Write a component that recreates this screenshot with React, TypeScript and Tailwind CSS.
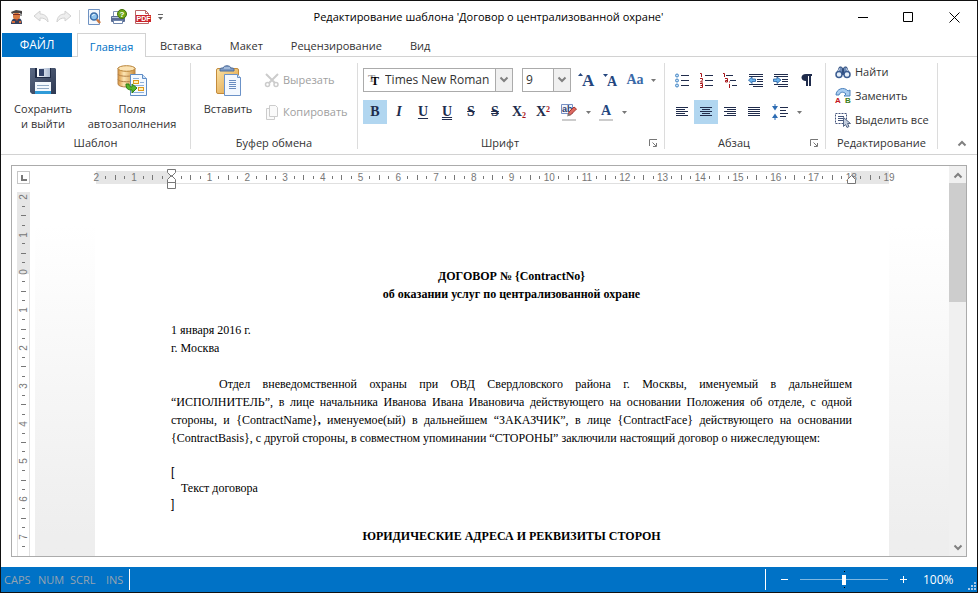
import type { ReactNode } from 'react';
import { clsx } from 'clsx';

const tabs = ['Вставка', 'Макет', 'Рецензирование', 'Вид'];

const horizontalMarks = Array.from({ length: 85 }, (_, i) => i);
const verticalMarks = Array.from({ length: 38 }, (_, i) => i);

const partiesText =
  'Отдел вневедомственной охраны при ОВД Свердловского района г. Москвы, именуемый в дальнейшем ' +
  '“ИСПОЛНИТЕЛЬ”, в лице начальника Иванова Ивана Ивановича действующего на основании Положения об ' +
  'отделе, с одной стороны, и {ContractName}';

const partiesTextEnd =
  ' именуемое(ый) в дальнейшем “ЗАКАЗЧИК”, в лице {ContractFace} действующего на основании ' +
  '{ContractBasis}, с другой стороны, в совместном упоминании “СТОРОНЫ” заключили настоящий договор ' +
  'о нижеследующем:';

/* ---------- icons ---------- */

function OfficerIcon() {
  return (
    <svg width="16" height="16" viewBox="0 0 16 16">
      <path d="M2 15c0-4 2-6 6-6s5 2 5 6z" fill="#34405c" />
      <path d="M5 9l3 3 2-3z" fill="#b8452a" />
      <rect x="4" y="4" width="7" height="6" rx="2" fill="#d9793f" />
      <path d="M2 3l5-2 6 1v3l-2-1H5L3 5z" fill="#4b4747" />
      <path d="M4 5h7v1H4z" fill="#7e2c25" />
      <path d="M12 3v4" stroke="#333" />
      <path d="M3 13h3M10 13h2" stroke="#d46a3a" strokeWidth="2" />
    </svg>
  );
}

function UndoIcon({ flip = false }: { flip?: boolean }) {
  return (
    <svg width="16" height="16" viewBox="0 0 16 16" className={clsx(flip && '-scale-x-100')}>
      <path d="M1 7l6-5v3c5 0 8 3 8 8-2-3-4-4-8-4v3z" fill="#eee" stroke="#d2d2d2" />
    </svg>
  );
}

function PreviewIcon() {
  return (
    <svg width="16" height="16" viewBox="0 0 16 16">
      <path d="M1.500.5h11v15h-11z" fill="#f4f8fd" stroke="#6f92c2" />
      <circle cx="7" cy="7.500" r="3.500" fill="#8fc4ee" stroke="#3d6ea9" strokeWidth="1.500" />
      <path d="M5.500 7c0-1 1-1.500 2-1.500" stroke="#fff" fill="none" />
      <path d="M10 10.500l3 3.500" stroke="#c9773f" strokeWidth="2.500" />
    </svg>
  );
}

function PrinterIcon() {
  return (
    <svg width="17" height="16" viewBox="0 0 17 16">
      <path d="M3.500 2.500h8v5h-8z" fill="#fff" stroke="#7f93b3" />
      <rect x="1" y="7" width="14" height="6" rx="1" fill="#5a6c94" />
      <path d="M2 8.500h12" stroke="#b6c4da" />
      <path d="M3.500 11.500h9v3h-9z" fill="#fff" stroke="#6f86ac" />
      <circle cx="12" cy="5" r="4.500" fill="#6fa818" stroke="#447109" />
      <text x="12" y="8" textAnchor="middle" fontSize="8" fontWeight="bold" fill="#fff" fontFamily="Liberation Sans, sans-serif">?</text>
    </svg>
  );
}

function PdfIcon() {
  return (
    <svg width="17" height="16" viewBox="0 0 17 16">
      <path d="M1.500 1.500h10l3 3v10h-13z" fill="#fff" stroke="#b66" />
      <path d="M11.500 1.500v3h3" fill="none" stroke="#b66" />
      <rect x="2" y="6" width="15" height="7" fill="#cc2228" />
      <text x="9.500" y="12" textAnchor="middle" fontSize="7" fontWeight="bold" fill="#fff" fontFamily="Liberation Sans, sans-serif">PDF</text>
    </svg>
  );
}

function SaveIcon() {
  return (
    <svg width="32" height="32" viewBox="0 0 32 32">
      <defs>
        <linearGradient id="disk" x1="0" y1="0" x2="1" y2="1">
          <stop offset="0" stopColor="#5b6983" />
          <stop offset="1" stopColor="#2d3852" />
        </linearGradient>
        <linearGradient id="shutter" x1="0" y1="0" x2="1" y2="0">
          <stop offset="0" stopColor="#fff" />
          <stop offset="1" stopColor="#a9b8d0" />
        </linearGradient>
      </defs>
      <path d="M3 3h25l1 1v25H5l-2-2z" fill="url(#disk)" />
      <path d="M8 3h16v10H8z" fill="#1f2a44" />
      <path d="M10 3h13v9H10z" fill="url(#shutter)" />
      <path d="M12 4h5v7h-5z" fill="#34446a" />
      <path d="M8 17h16v12H8z" fill="#f3f8fd" />
      <path d="M10 20.500h12M10 23.500h12" stroke="#8ea8c4" />
      <path d="M8 26h16v3H8z" fill="#2f9bd8" />
    </svg>
  );
}

function FieldsIcon() {
  return (
    <svg width="32" height="32" viewBox="0 0 32 32">
      <defs>
        <linearGradient id="barrel" x1="0" y1="0" x2="1" y2="0">
          <stop offset="0" stopColor="#d9953f" />
          <stop offset=".35" stopColor="#fde6b4" />
          <stop offset="1" stopColor="#c98a38" />
        </linearGradient>
      </defs>
      <path d="M2 3v16c0 4 17 4 17 0V3z" fill="url(#barrel)" stroke="#b5834a" />
      <path d="M2 9c0 3 17 3 17 0M2 14.500c0 3 17 3 17 0" fill="none" stroke="#b5834a" />
      <ellipse cx="10.500" cy="3.500" rx="8.500" ry="2.800" fill="#fbe3b4" stroke="#b98337" />
      <path d="M14.500 9.500h12l4 4v17h-16z" fill="#f4f9ff" stroke="#5f8dc6" />
      <path d="M26.500 9.500v4h4" fill="#cfe2f7" stroke="#5f8dc6" />
      <path d="M17 13.500h6M24 17.500h4M17 20.500h11M17 27.500h11" stroke="#8db0da" />
      <rect x="17.500" y="15.500" width="5" height="3" fill="#fff0b8" stroke="#df9a1d" />
      <rect x="22.500" y="22.500" width="5" height="3" fill="#fff0b8" stroke="#df9a1d" />
      <path d="M10 19c0 5 2 6 6 6v3l5-5-5-4v3c-2 0-3-1-3-3z" fill="#55b52c" stroke="#2c7d15" />
    </svg>
  );
}

function PasteIcon() {
  return (
    <svg width="32" height="32" viewBox="0 0 32 32">
      <defs>
        <linearGradient id="board" x1="0" y1="0" x2="1" y2="1">
          <stop offset="0" stopColor="#fbe3a6" />
          <stop offset="1" stopColor="#dc9a3c" />
        </linearGradient>
      </defs>
      <rect x="4.500" y="3.500" width="22" height="25" rx="1.500" fill="url(#board)" stroke="#c48b3b" />
      <path d="M8 6V4c0-1 2-1 3-1 1-3 7-3 8 0 1 0 3 0 3 1v2z" fill="#7b98c2" stroke="#4c6c9c" />
      <path d="M12 3h6" stroke="#c9dbf2" />
      <path d="M12.500 9.500h13l3 3v18h-16z" fill="#f3f8ff" stroke="#6b92c8" />
      <path d="M25.500 9.500v3h3" fill="#d5e5f7" stroke="#6b92c8" />
      <path d="M17 15.500h7M17 17.500h7M17 19.500h7M17 21.500h7M17 23.500h7" stroke="#6a8cc0" />
    </svg>
  );
}

function CutIcon() {
  return (
    <svg width="16" height="16" viewBox="0 0 16 16" fill="none" stroke="#ccc">
      <path d="M2 2l9 9M14 2L5 11" strokeWidth="2" />
      <circle cx="3.500" cy="12.500" r="2" strokeWidth="1.500" />
      <circle cx="12" cy="12.500" r="2" strokeWidth="1.500" />
    </svg>
  );
}

function CopyIcon() {
  return (
    <svg width="16" height="16" viewBox="0 0 16 16" fill="#fafafa" stroke="#ccc">
      <path d="M2.500 4.500h8v11h-8z" />
      <path d="M5.500 1.500h6l2 2v9h-8z" />
    </svg>
  );
}

function FindIcon() {
  return (
    <svg width="16" height="16" viewBox="0 0 16 16">
      <path d="M4.500 3h2L8 5l1.500-2h2L14 9H2z" fill="#6f8cb8" stroke="#2f4d7d" />
      <path d="M4.500 4.500L3 8M11.500 4.500L13 8" stroke="#dbe7f6" />
      <path d="M8 5v6" stroke="#2f4d7d" strokeWidth="2" />
      <circle cx="4" cy="10.500" r="3" fill="#e6f0fb" stroke="#3b5c91" strokeWidth="1.500" />
      <circle cx="12" cy="10.500" r="3" fill="#e6f0fb" stroke="#3b5c91" strokeWidth="1.500" />
    </svg>
  );
}

function ReplaceIcon() {
  return (
    <svg width="16" height="18" viewBox="0 0 16 18">
      <path d="M1 8c0-6 8-9 12-4l2-1v6H9l2-2C8 4 5 5 4 8z" fill="#a9cdf0" stroke="#4d82bd" />
      <g fontSize="8" fontWeight="bold" fontFamily="Liberation Sans, sans-serif">
        <text x="0" y="16" fill="#c3161c">A</text>
        <text x="10" y="16" fill="#3c7d1a">B</text>
      </g>
    </svg>
  );
}

function SelectAllIcon() {
  return (
    <svg width="16" height="16" viewBox="0 0 16 16">
      <path d="M.5 1.500h11v10H.5z" fill="none" stroke="#45557c" strokeDasharray="2 1" />
      <path d="M3 4.500h6M3 6.500h6M3 8.500h5" stroke="#45557c" />
      <path d="M8.500 5.500v9l2-2 1.500 3 2-1-1.500-3h3z" fill="#c3cddd" stroke="#556786" />
    </svg>
  );
}

type Line = [number, number, number];

function Lines({ lines, children }: { lines: Line[]; children?: ReactNode }) {
  return (
    <svg width="16" height="16" viewBox="0 0 16 16">
      {lines.map(([x, y, w]) => (
        <rect key={`${x}-${y}`} x={x} y={y} width={w} height="1" fill="#202c4c" />
      ))}
      {children}
    </svg>
  );
}

function BulletsIcon() {
  return (
    <Lines lines={[[7, 3, 8], [7, 8, 8], [7, 13, 8]]}>
      {[3.5, 8.5, 13.5].map((y) => (
        <circle key={y} cx="3" cy={y} r="1.500" fill="#c5e1f7" stroke="#4384c4" />
      ))}
    </Lines>
  );
}

function NumberingIcon() {
  return (
    <Lines lines={[[7, 3, 8], [7, 8, 8], [7, 13, 8]]}>
      <g fill="none" stroke="#a8161b">
        <path d="M2 1.500h1.500V5" />
        <path d="M2 6.500h2.500v1.500l-2 2h2.500" />
        <path d="M2 11.500h2.500v4H2M2.500 13.500h2" />
      </g>
    </Lines>
  );
}

function MultilevelIcon() {
  return (
    <Lines lines={[[4, 3, 7], [8, 8, 6], [10, 13, 5]]}>
      <g fill="none" stroke="#a8161b">
        <path d="M1 1.500h1.500V5" />
        <path d="M3 6.500h2.500V10M5.500 8.500h-2V10h2" />
        <path d="M7.500 9.500v1M7.500 12v4" />
      </g>
    </Lines>
  );
}

function IndentIcon({ increase = false }: { increase?: boolean }) {
  return (
    <Lines lines={[[1, 2, 14], [1, 4, 14], [9, 7, 6], [9, 9, 6], [1, 12, 14], [5, 14, 10]]}>
      <path
        d={increase ? 'M.5 7v2.500H4v2L8 8 4 5v2z' : 'M7.500 7v2.500H4v2L.5 8 4 5v2z'}
        fill="#6db4ee"
        stroke="#235e9f"
        strokeWidth=".8"
      />
    </Lines>
  );
}

const leftLines: Line[] = [[2, 3, 12], [2, 5, 9], [2, 7, 12], [2, 9, 9], [2, 11, 12]];
const centerLines: Line[] = [[2, 3, 12], [4, 5, 8], [2, 7, 12], [4, 9, 8], [2, 11, 12]];
const rightLines: Line[] = [[2, 3, 12], [5, 5, 9], [2, 7, 12], [5, 9, 9], [2, 11, 12]];
const justifyLines: Line[] = [[2, 3, 12], [2, 5, 12], [2, 7, 12], [2, 9, 12], [2, 11, 12]];

function SpacingIcon() {
  return (
    <Lines lines={[[8, 3, 8], [8, 6, 6], [8, 9, 8], [8, 12, 6]]}>
      <path d="M3 0v3M3 16v-3" stroke="#2d6cb3" />
      <path d="M0 5h6L3 1zM0 11h6l-3 4z" fill="#2d6cb3" className="hidden" />
      <path d="M0 2h6L3 6.500zM0 14h6L3 9.500z" fill="#2d6cb3" />
    </Lines>
  );
}

function HighlightIcon() {
  return (
    <svg width="18" height="18" viewBox="0 0 18 18">
      <path d="M1.500 1.500h11v9h-11z" fill="#f2f6fd" stroke="#7790c4" />
      <text x="2" y="9" fontSize="9" fontWeight="bold" fill="#2c3f70" fontFamily="Liberation Sans, sans-serif">ab</text>
      <path d="M8 12l1-3 5-5 2.500 2-6 6z" fill="#dd6a62" stroke="#a8352d" />
      <path d="M7 13.500L8.500 10l2.500 2z" fill="#777" />
      <path d="M2 16h14v2H2z" fill="#ccc" />
    </svg>
  );
}

function Arrow() {
  return (
    <svg width="5" height="3" viewBox="0 0 5 3">
      <path d="M0 0h5L2.500 3z" fill="#777" />
    </svg>
  );
}

function Chevron({ up = false }: { up?: boolean }) {
  return (
    <svg width="10" height="8" viewBox="0 0 10 8" className={clsx(up && 'rotate-180')}>
      <path d="M1.500 1.500L5 5l3.500-3.500" fill="none" stroke="#808080" strokeWidth="2" />
    </svg>
  );
}

/* ---------- ribbon parts ---------- */

function Group({ title, launcher, className, children }: { title: string; launcher?: boolean; className: string; children: ReactNode }) {
  return (
    <section className={clsx('flex shrink-0 flex-col border-r border-[#dcdcdc]', className)}>
      <div className="flex-1">{children}</div>
      <div className="flex h-3 items-center">
        <h2 className="flex-1 text-center leading-3">{title}</h2>
        {launcher && (
          <button type="button" aria-label={`${title}: параметры`} className="flex w-[22px] justify-center">
            <svg width="9" height="9" viewBox="0 0 9 9" fill="none" stroke="#777">
              <path d="M.5 7V.5H8M3.500 3.500L7 7M7.500 4v3.500H4" />
            </svg>
          </button>
        )}
      </div>
    </section>
  );
}

function BigButton({ icon, lines, className }: { icon: ReactNode; lines: string[]; className: string }) {
  return (
    <button type="button" className={clsx('flex flex-col items-center gap-1 pt-0.5 leading-[15px]', className)}>
      {icon}
      <span>
        {lines.map((line) => (
          <span key={line} className="block whitespace-nowrap">{line}</span>
        ))}
      </span>
    </button>
  );
}

function Tool({ label, active, wide, children }: { label: string; active?: boolean; wide?: boolean; children: ReactNode }) {
  return (
    <button
      type="button"
      aria-label={label}
      aria-pressed={active}
      className={clsx(
        'flex h-6 items-center justify-center font-["Liberation_Serif",serif] text-[14px] leading-4 font-bold text-[#202c4c]',
        wide ? 'w-[27px]' : 'w-6',
        active && 'bg-[#b1d6f0]',
      )}
    >
      {children}
    </button>
  );
}

function DropArrow({ label }: { label: string }) {
  return (
    <button type="button" aria-label={label} className="flex h-6 w-3 items-center justify-center">
      <Arrow />
    </button>
  );
}

function Combo({ label, value, icon, className }: { label: string; value: string; icon?: ReactNode; className: string }) {
  return (
    <div className={clsx('relative flex h-6 items-center border border-[#ababab]', className)}>
      {icon}
      <select aria-label={label} className="h-full min-w-0 flex-1 appearance-none bg-transparent pl-[3px] text-[12px] outline-none">
        <option>{value}</option>
      </select>
      <span className="pointer-events-none absolute inset-y-0 right-0 flex w-[17px] items-center justify-center border-l border-[#ababab] bg-[#f0f0f0]">
        <Chevron />
      </span>
    </div>
  );
}

/* ---------- rulers ---------- */

function HorizontalRuler() {
  return (
    <div className="grid h-[18px] w-[793px] shrink-0 grid-cols-1">
      <div className="col-start-1 row-start-1 flex h-[13px]">
        <div className="w-[76px] bg-[#e6e6e6]" />
        <div className="flex-1 border-y border-[#e0e0e0] bg-white" />
        <div className="w-[38px] bg-[#e6e6e6]" />
      </div>
      <div className="col-start-1 row-start-1 -mr-[5px] -ml-1 flex h-[13px] items-center font-['Liberation_Sans',sans-serif] text-[10px] leading-3 text-[#777]">
        {horizontalMarks.map((i) => (
          <span key={i} className="flex w-0 flex-1 justify-center">
            {i === 8 && (
              <svg width="9" height="20" viewBox="0 0 9 20" className="mt-[3px] shrink-0" fill="#fff" stroke="#777">
                <path d="M.5.500h8v3l-4 4-4-4zM.5 13.500h8v-3l-4-4-4 4zM.5 13.500h8v6h-8z" />
              </svg>
            )}
            {i % 4 === 0 && i !== 8 && i !== 80 && Math.abs(i / 4 - 2)}
            {i === 80 && (
              <span className="grid shrink-0 place-items-center">
                <span className="col-start-1 row-start-1">18</span>
                <svg width="9" height="9" viewBox="0 0 9 9" className="col-start-1 row-start-1 mt-[3px]" fill="#fff" stroke="#777">
                  <path d="M.5 8.500h8v-4l-4-4-4 4z" />
                </svg>
              </span>
            )}
            {i % 4 === 2 && <i className="h-[5px] w-px bg-[#777]" />}
            {i % 2 === 1 && <i className="h-[3px] w-px bg-[#777]" />}
          </span>
        ))}
      </div>
    </div>
  );
}

function VerticalRuler() {
  return (
    <div className="grid w-[13px] flex-1 grid-cols-1">
      <div className="col-start-1 row-start-1 flex flex-col">
        <div className="h-[82px] bg-[#e6e6e6]" />
        <div className="flex-1 border-x border-[#e0e0e0] bg-white" />
      </div>
      <div className="col-start-1 row-start-1 flex h-[359px] flex-col font-['Liberation_Sans',sans-serif] text-[10px] leading-3 text-[#777]">
        {verticalMarks.map((i) => (
          <span key={i} className="flex h-0 flex-1 items-center justify-center">
            {i % 4 === 0 && <span className="-rotate-90">{Math.abs(i / 4 - 2)}</span>}
            {i % 4 === 2 && <i className="h-px w-[5px] bg-[#777]" />}
            {i % 2 === 1 && <i className="h-px w-[3px] bg-[#777]" />}
          </span>
        ))}
      </div>
    </div>
  );
}

/* ---------- window ---------- */

function TitleBar() {
  return (
    <header className="flex h-8 items-center pl-2">
      <div className="flex w-[163px] items-center">
        <OfficerIcon />
        <button type="button" aria-label="Отменить" className="ml-2"><UndoIcon /></button>
        <button type="button" aria-label="Повторить" className="ml-[7px]"><UndoIcon flip /></button>
        <span className="ml-[7px] h-[14px] w-px bg-[#dcdcdc]" />
        <button type="button" aria-label="Просмотр" className="ml-[7px]"><PreviewIcon /></button>
        <button type="button" aria-label="Печать" className="ml-[7px]"><PrinterIcon /></button>
        <button type="button" aria-label="Экспорт в PDF" className="ml-[7px]"><PdfIcon /></button>
        <button type="button" aria-label="Настройка панели" className="ml-[7px]">
          <svg width="5" height="6" viewBox="0 0 5 6" fill="#666">
            <path d="M0 0h5v1H0zM0 3h5L2.500 6z" />
          </svg>
        </button>
      </div>
      <h1 className="flex-1 pr-9 text-center text-black">Редактирование шаблона 'Договор о централизованной охране'</h1>
      <div className="flex">
        <button type="button" aria-label="Свернуть" className="flex h-7 w-[45px] items-center justify-center">
          <svg width="11" height="11" stroke="#000"><path d="M0 5.500h10" /></svg>
        </button>
        <button type="button" aria-label="Развернуть" className="flex h-7 w-[45px] items-center justify-center">
          <svg width="11" height="11" stroke="#000" fill="none"><path d="M.5.500h9v9h-9z" /></svg>
        </button>
        <button type="button" aria-label="Закрыть" className="flex h-7 w-[46px] items-center justify-center">
          <svg width="11" height="11" stroke="#000"><path d="M.5.500l10 10M10.500.5l-10 10" /></svg>
        </button>
      </div>
    </header>
  );
}

function Ribbon() {
  return (
    <div className="flex h-[98px] shrink-0 border-b border-[#d2d2d2] pt-[6px] pb-[5px]">
      <Group title="Шаблон" className="w-[190px]">
        <div className="flex pl-[3px]">
          <BigButton icon={<SaveIcon />} lines={['Сохранить', 'и выйти']} className="w-[78px]" />
          <BigButton icon={<FieldsIcon />} lines={['Поля', 'автозаполнения']} className="w-[100px]" />
        </div>
      </Group>

      <Group title="Буфер обмена" className="w-[167px]">
        <div className="flex pl-[7px]">
          <BigButton icon={<PasteIcon />} lines={['Вставить']} className="w-[60px]" />
          <div className="flex flex-col gap-2 pt-[5px] pl-[6px] text-[#a0a0a0]">
            <button type="button" disabled className="flex h-6 items-center gap-[3px]"><CutIcon />Вырезать</button>
            <button type="button" disabled className="flex h-6 items-center gap-[3px]"><CopyIcon />Копировать</button>
          </div>
        </div>
      </Group>

      <Group title="Шрифт" launcher className="w-[307px]">
        <div className="flex flex-col gap-2 pt-[5px] pl-[5px]">
          <div className="flex">
            <Combo
              label="Шрифт"
              value="Times New Roman"
              className="w-[150px]"
              icon={
                <svg width="15" height="14" viewBox="0 0 15 14" className="ml-[3px]" fontFamily="Liberation Serif, serif" fontWeight="bold">
                  <text x="1" y="9" fontSize="11" fill="#999">T</text>
                  <text x="4" y="12" fontSize="12" fill="#000">T</text>
                </svg>
              }
            />
            <Combo label="Размер шрифта" value="9" className="ml-[9px] w-[49px]" />
            <div className="flex pl-1">
              <Tool label="Увеличить размер">
                <svg width="18" height="18" viewBox="0 0 18 18" fill="#24467e">
                  <path d="M0 5h5L2.500 2z" />
                  <text x="4" y="15" fontSize="17">A</text>
                </svg>
              </Tool>
              <Tool label="Уменьшить размер">
                <svg width="18" height="18" viewBox="0 0 18 18" fill="#24467e">
                  <path d="M1 3h5L3.500 6z" />
                  <text x="5" y="15" fontSize="14">A</text>
                </svg>
              </Tool>
              <Tool label="Регистр"><span className="text-[#3a69a8]">Aa</span></Tool>
              <DropArrow label="Варианты регистра" />
            </div>
          </div>
          <div className="flex">
            <Tool label="Полужирный" active>B</Tool>
            <Tool label="Курсив"><em>I</em></Tool>
            <Tool label="Подчеркнутый"><u className="underline-offset-2">U</u></Tool>
            <Tool label="Двойное подчеркивание"><span className="underline decoration-double underline-offset-1">U</span></Tool>
            <Tool label="Зачеркнутый"><s className="px-px">S</s></Tool>
            <Tool label="Двойное зачеркивание"><span className="line-through decoration-double">S</span></Tool>
            <Tool label="Подстрочный"><span>X<sub className="text-[8px] text-[#a8161b]">2</sub></span></Tool>
            <Tool label="Надстрочный"><span>X<sup className="text-[8px] text-[#a8161b]">2</sup></span></Tool>
            <Tool label="Цвет выделения" wide><HighlightIcon /></Tool>
            <DropArrow label="Цвета выделения" />
            <Tool label="Цвет шрифта">
              <span className="border-b-2 border-[#ccc] px-0.5 text-[#24467e]">A</span>
            </Tool>
            <DropArrow label="Цвета шрифта" />
          </div>
        </div>
      </Group>

      <Group title="Абзац" launcher className="w-[161px]">
        <div className="flex flex-col gap-2 pt-[5px] pl-[5px]">
          <div className="flex">
            <Tool label="Маркеры"><BulletsIcon /></Tool>
            <Tool label="Нумерация"><NumberingIcon /></Tool>
            <Tool label="Многоуровневый список"><MultilevelIcon /></Tool>
            <Tool label="Уменьшить отступ" wide><IndentIcon /></Tool>
            <Tool label="Увеличить отступ"><IndentIcon increase /></Tool>
            <Tool label="Знаки абзаца" wide>
              <svg width="12" height="14" viewBox="0 0 12 14" fill="#202c4c">
                <path d="M5 1h6v2h-1v10H8V3H7v10H5V8C-1 8-1 1 5 1z" />
              </svg>
            </Tool>
          </div>
          <div className="flex">
            <Tool label="По левому краю"><Lines lines={leftLines} /></Tool>
            <Tool label="По центру" active><Lines lines={centerLines} /></Tool>
            <Tool label="По правому краю"><Lines lines={rightLines} /></Tool>
            <Tool label="По ширине"><Lines lines={justifyLines} /></Tool>
            <Tool label="Интервал" wide><SpacingIcon /></Tool>
            <DropArrow label="Варианты интервала" />
          </div>
        </div>
      </Group>

      <Group title="Редактирование" className="w-[112px]">
        <div className="flex flex-col items-start gap-[6px] pl-[9px]">
          <button type="button" className="flex h-[18px] items-center gap-1"><FindIcon />Найти</button>
          <button type="button" className="flex h-[18px] items-center gap-1"><ReplaceIcon />Заменить</button>
          <button type="button" className="flex h-[18px] items-center gap-1 whitespace-nowrap"><SelectAllIcon />Выделить все</button>
        </div>
      </Group>

      <button type="button" aria-label="Свернуть ленту" className="mt-auto mr-[10px] mb-0.5 ml-auto">
        <Chevron up />
      </button>
    </div>
  );
}

function Page() {
  return (
    <article className="w-[794px] shrink-0 bg-white pt-[78px] pr-[37px] pl-[76px] font-['Liberation_Serif',serif] text-[12px] leading-[18px] text-black">
      <h3 className="text-center font-bold">
        {'ДОГОВОР № {ContractNo}'}
        <br />
        об оказании услуг по централизованной охране
      </h3>
      <p className="mt-[18px]">
        1 января 2016 г.
        <br />
        г. Москва
      </p>
      <p className="mt-[18px] indent-12 text-justify">
        {partiesText}
        <b>,</b>
        {partiesTextEnd}
      </p>
      <div className="mt-[17px] leading-4">
        <p className="font-['Liberation_Sans',sans-serif]">[</p>
        <p className="pl-[10px]">Текст договора</p>
        <p className="font-['Liberation_Sans',sans-serif]">]</p>
        <h3 className="mt-4 text-center font-bold">ЮРИДИЧЕСКИЕ АДРЕСА И РЕКВИЗИТЫ СТОРОН</h3>
      </div>
    </article>
  );
}

function Editor() {
  return (
    <main className="mx-[10px] my-[10px] flex min-h-0 flex-1 overflow-hidden border border-[#ababab]">
      <div className="flex w-[23px] shrink-0 flex-col gap-2 pt-[5px] pl-[5px]">
        <button type="button" aria-label="Табуляция" className="flex size-[13px] items-center justify-center border border-[#c6c6c6]">
          <i className="size-[6px] border-b-2 border-l-2 border-[#777]" />
        </button>
        <VerticalRuler />
      </div>
      <div className="flex min-w-0 flex-1 flex-col items-center overflow-hidden bg-linear-to-b from-white from-15% to-[#eee] to-95%">
        <div className="flex w-full shrink-0 justify-center bg-white pt-[5px]">
          <HorizontalRuler />
        </div>
        <div className="flex min-h-0 flex-1">
          <Page />
        </div>
      </div>
      <div className="flex w-[17px] shrink-0 flex-col bg-[#f0f0f0]">
        <button type="button" aria-label="Вверх" className="flex h-[17px] items-center justify-center"><Chevron up /></button>
        <div className="h-[119px] bg-[#cdcdcd]" />
        <button type="button" aria-label="Вниз" className="mt-auto flex h-[17px] items-center justify-center"><Chevron /></button>
      </div>
    </main>
  );
}

function StatusBar() {
  return (
    <footer className="flex h-[25px] shrink-0 items-center bg-[#0072c6] pl-[3px] text-[#96a3b0]">
      <span className="w-[34px]">CAPS</span>
      <span className="w-8">NUM</span>
      <span className="w-9">SCRL</span>
      <span className="w-[23px]">INS</span>
      <span className="h-[21px] w-px bg-white" />
      <div className="ml-auto flex items-center text-white">
        <span className="h-[21px] w-px bg-white" />
        <button type="button" aria-label="Уменьшить" className="ml-[15px]">
          <svg width="7" height="7" stroke="#fff"><path d="M0 3.500h7" /></svg>
        </button>
        <div className="ml-[12px] flex flex-col items-center gap-0.5">
          <i className="size-px bg-black" />
          <input
            type="range"
            aria-label="Масштаб"
            min={0}
            max={200}
            defaultValue={100}
            className="h-[11px] w-[88px] appearance-none bg-linear-to-b from-transparent from-45% via-white via-45% to-transparent to-55% [&::-webkit-slider-thumb]:h-[10px] [&::-webkit-slider-thumb]:w-1 [&::-webkit-slider-thumb]:appearance-none [&::-webkit-slider-thumb]:bg-white"
          />
          <i className="size-px bg-black" />
        </div>
        <button type="button" aria-label="Увеличить" className="ml-3">
          <svg width="7" height="7" stroke="#fff"><path d="M0 3.500h7M3.500 0v7" /></svg>
        </button>
        <span className="ml-4 w-[45px] text-[12px]">100%</span>
        <svg width="8" height="8" viewBox="0 0 8 8" fill="#a9c9e6" className="mt-auto mr-px self-end">
          <path d="M6 0h2v2H6zM3 3h2v2H3zM6 3h2v2H6zM0 6h2v2H0zM3 6h2v2H3zM6 6h2v2H6z" />
        </svg>
      </div>
    </footer>
  );
}

export default function App() {
  return (
    <div className="flex h-screen flex-col border border-[#111] bg-white font-['Open_Sans',sans-serif] text-[11px] leading-4 text-[#333]">
      <TitleBar />
      <nav className="flex h-6 shrink-0 items-stretch">
        <button type="button" className="ml-px w-[70px] bg-[#0072c6] text-[12px] text-white">ФАЙЛ</button>
        <span className="w-[5px] border-b border-[#d2d2d2]" />
        <button type="button" className="w-[69px] border border-b-0 border-[#d2d2d2] pt-0.5 text-[#0072c6]">Главная</button>
        {tabs.map((tab) => (
          <button key={tab} type="button" className="border-b border-[#d2d2d2] px-[14px] pt-0.5">{tab}</button>
        ))}
        <span className="flex-1 border-b border-[#d2d2d2]" />
      </nav>
      <Ribbon />
      <Editor />
      <StatusBar />
    </div>
  );
}
